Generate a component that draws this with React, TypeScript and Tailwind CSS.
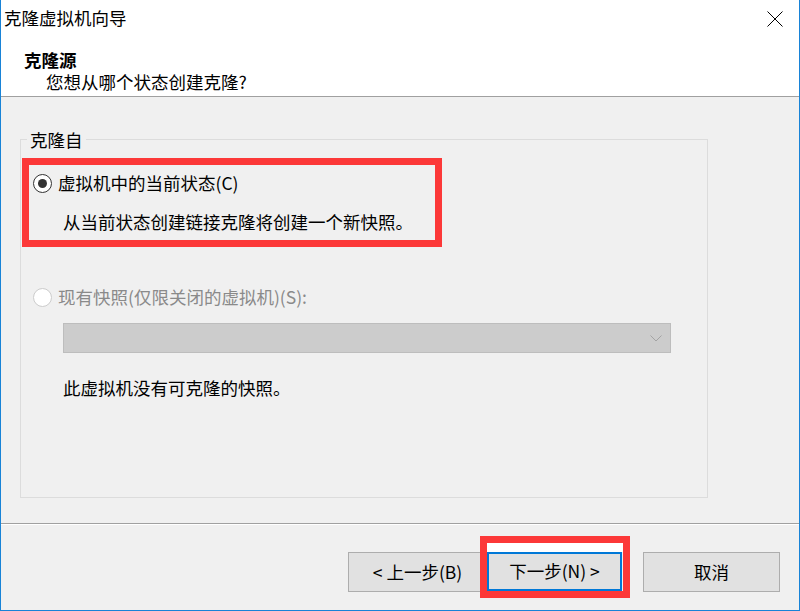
import React from "react";

const font = { fontFamily: '"Noto Sans CJK SC", "Microsoft YaHei", sans-serif' };

function Radio({ checked, disabled }: { checked?: boolean; disabled?: boolean }) {
  return (
    <span
      className={
        "flex h-[19px] w-[19px] shrink-0 items-center justify-center rounded-full border bg-white " +
        (disabled ? "border-[#cccccc]" : "border-[#333333] border-[1.5px]")
      }
    >
      {checked && <span className="h-[9px] w-[9px] rounded-full bg-[#333333]" />}
    </span>
  );
}

export default function App() {
  return (
    <div
      style={font}
      className="relative flex h-[611px] w-[800px] flex-col border-x border-b border-[#1883d7] bg-white text-[17.5px] text-black"
    >
      {/* title bar */}
      <div className="flex h-[36px] items-center justify-between pl-[3px] pr-[16px]">
        <span className="leading-[24px]">克隆虚拟机向导</span>
        <svg width="16" height="16" viewBox="0 0 16 16" className="mt-[1px]">
          <path d="M0.5 0.5 L15.5 15.5 M15.5 0.5 L0.5 15.5" stroke="#000" strokeWidth="1" fill="none" />
        </svg>
      </div>

      {/* header */}
      <div className="h-[60px] pl-[23px] pt-[13px]">
        <div className="font-bold leading-[22px]">克隆源</div>
        <div className="pl-[22px] leading-[22px]">您想从哪个状态创建克隆?</div>
      </div>
      <div className="h-px bg-[#a0a0a0]" />

      {/* body */}
      <div className="h-[426px] bg-[#f0f0f0] px-[19px] pt-[42px]">
        <div className="h-[359px] w-[688px] border border-[#dcdcdc]">
          <div className="-mt-[12px] ml-[6px] w-fit bg-[#f0f0f0] px-[3px] leading-[24px]">克隆自</div>

          <div className="mt-[19px] flex h-[24px] items-center gap-[6px] pl-[12px]">
            <Radio checked />
            <span className="leading-[24px]">虚拟机中的当前状态(C)</span>
          </div>
          <div className="mt-[15px] pl-[42px] leading-[24px]">从当前状态创建链接克隆将创建一个新快照。</div>

          <div className="mt-[51px] flex h-[24px] items-center gap-[6px] pl-[12px]">
            <Radio disabled />
            <span className="leading-[24px] text-[#8a8a8a]">现有快照(仅限关闭的虚拟机)(S):</span>
          </div>

          <div className="ml-[42px] mt-[14px] flex h-[30px] w-[608px] items-center justify-end border border-[#bdbdbd] bg-[#cccccc] pr-[8px]">
            <svg width="12" height="7" viewBox="0 0 12 7">
              <path d="M0.5 0.5 L6 6 L11.5 0.5" stroke="#a3a3a3" strokeWidth="1" fill="none" />
            </svg>
          </div>

          <div className="mt-[23px] pl-[42px] leading-[24px]">此虚拟机没有可克隆的快照。</div>
        </div>
      </div>

      <div className="h-px bg-[#a0a0a0]" />
      <div className="h-px bg-white" />

      {/* footer */}
      <div className="flex flex-1 items-start justify-end bg-[#f0f0f0] pr-[19px] pt-[27px]">
        <button className="flex h-[40px] w-[139px] items-center justify-center border border-[#adadad] bg-[#e1e1e1]">
          &lt; 上一步(B)
        </button>
        <button className="flex h-[39px] w-[135px] items-center justify-center border-2 border-[#0078d7] bg-[#e1e1e1]">
          下一步(N) &gt;
        </button>
        <button className="ml-[21px] flex h-[40px] w-[137px] items-center justify-center border border-[#adadad] bg-[#e1e1e1]">
          取消
        </button>
      </div>

      {/* annotation boxes */}
      <div className="absolute left-[21px] top-[158px] h-[89px] w-[420px] border-[7px] border-[#fc3838]" />
      <div className="absolute left-[479px] top-[536px] flex h-[62px] w-[150px] flex-col border-[7px] border-[#fc3838]">
        <div className="h-[9px] bg-white" />
      </div>
    </div>
  );
}
